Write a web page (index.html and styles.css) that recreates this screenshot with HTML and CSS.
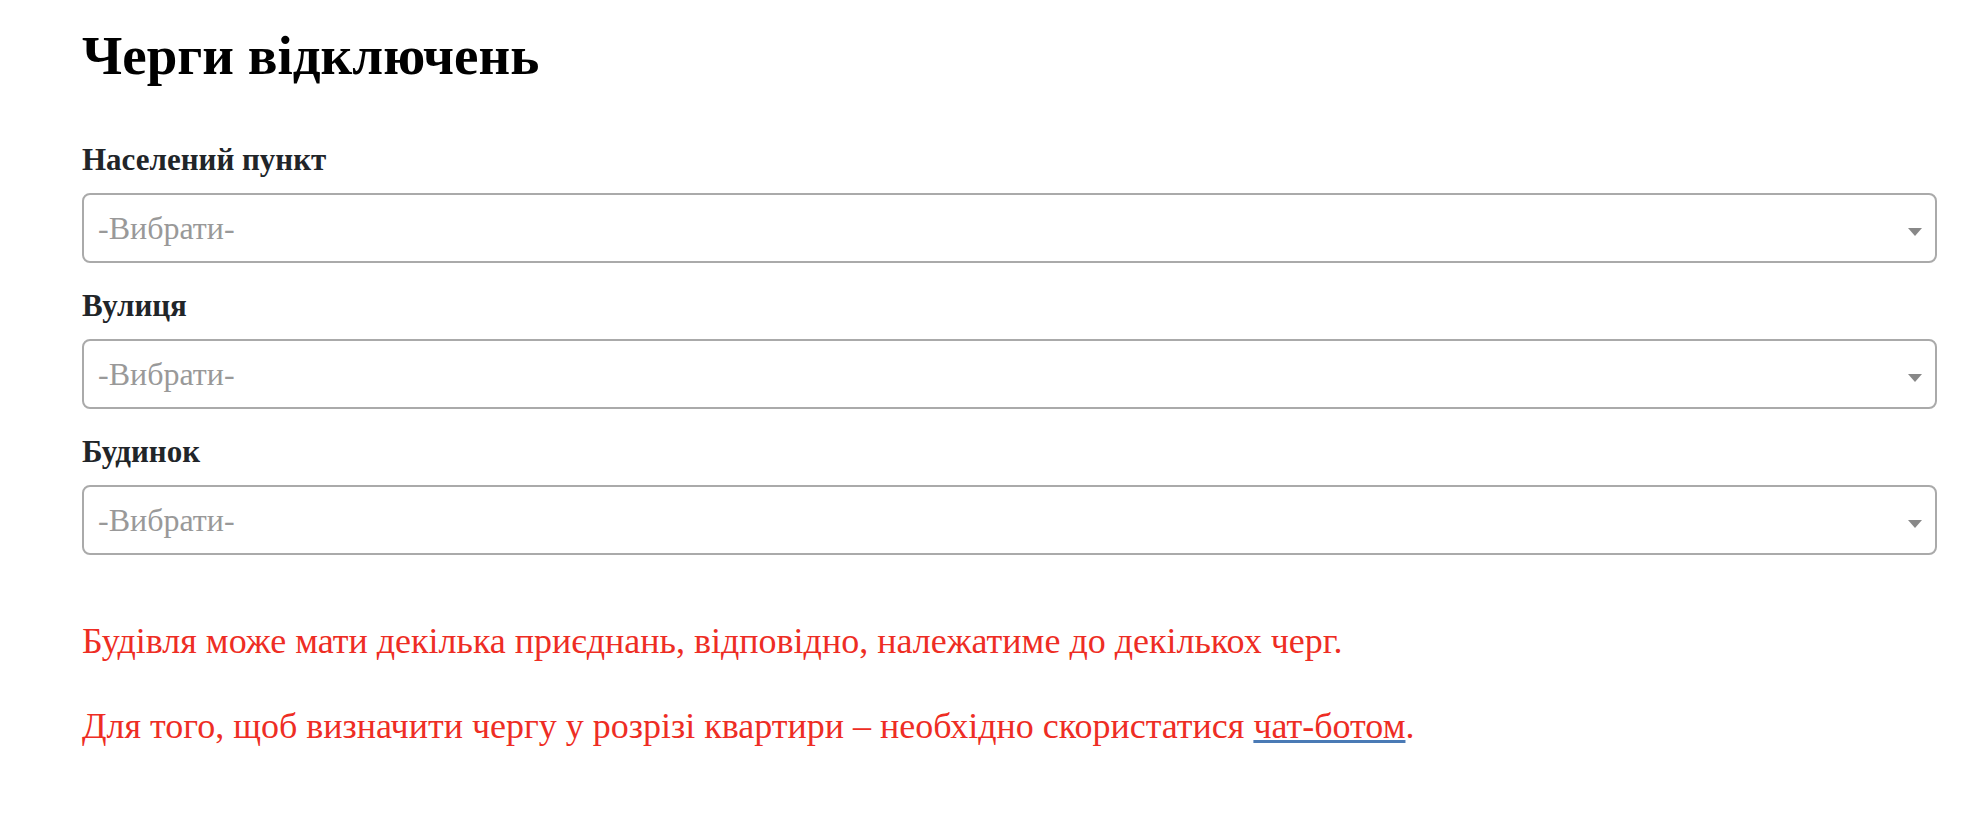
FILE: index.html
```html
<!DOCTYPE html>
<html lang="uk">
<head>
<meta charset="utf-8">
<title>Черги відключень</title>
<link rel="stylesheet" href="styles.css">
</head>
<body>
<main class="page">
  <h1 class="page-title">Черги відключень</h1>
  <form class="queue-form">
    <div class="field">
      <label class="field-label">Населений пункт</label>
      <div class="select-box">
        <span class="select-placeholder">-Вибрати-</span>
        <span class="select-arrow"></span>
      </div>
    </div>
    <div class="field">
      <label class="field-label">Вулиця</label>
      <div class="select-box">
        <span class="select-placeholder">-Вибрати-</span>
        <span class="select-arrow"></span>
      </div>
    </div>
    <div class="field">
      <label class="field-label">Будинок</label>
      <div class="select-box">
        <span class="select-placeholder">-Вибрати-</span>
        <span class="select-arrow"></span>
      </div>
    </div>
  </form>
  <div class="notes">
    <p class="note">Будівля може мати декілька приєднань, відповідно, належатиме до декількох черг.</p>
    <p class="note">Для того, щоб визначити чергу у розрізі квартири – необхідно скористатися <a class="note-link" href="#">чат-ботом</a>.</p>
  </div>
</main>
</body>
</html>
```
FILE: styles.css
```css
html, body {
  margin: 0;
  background: #ffffff;
}

body {
  font-family: "Liberation Serif", "Times New Roman", serif;
  color: #212529;
}

.page {
  padding: 22px 51px 0 82px;
}

.page-title {
  margin: 0 0 51px;
  font-size: 55px;
  line-height: 67px;
  font-weight: 700;
  color: #000000;
}

.queue-form {
  display: flex;
  flex-direction: column;
  gap: 23px;
}

.field {
  display: flex;
  flex-direction: column;
}

.field-label {
  font-size: 31px;
  line-height: 40px;
  font-weight: 700;
  margin-bottom: 13px;
}

.select-box {
  height: 70px;
  box-sizing: border-box;
  border: 2px solid #aaaaaa;
  border-radius: 8px;
  display: flex;
  align-items: center;
  justify-content: space-between;
  padding: 0 13px 0 14px;
}

.select-placeholder {
  font-size: 32px;
  color: #999999;
}

.select-arrow {
  width: 0;
  height: 0;
  margin-top: 7px;
  border-style: solid;
  border-width: 8px 7.5px 0 7.5px;
  border-color: #888888 transparent transparent transparent;
}

.notes {
  margin-top: 62px;
}

.note {
  margin: 0 0 37px;
  font-size: 36px;
  line-height: 48px;
  color: #ee2d24;
}

.note-link {
  color: #ee2d24;
  text-decoration: underline;
  text-decoration-color: #4a7ab5;
  text-decoration-thickness: 3px;
  text-underline-offset: 2px;
}
```
